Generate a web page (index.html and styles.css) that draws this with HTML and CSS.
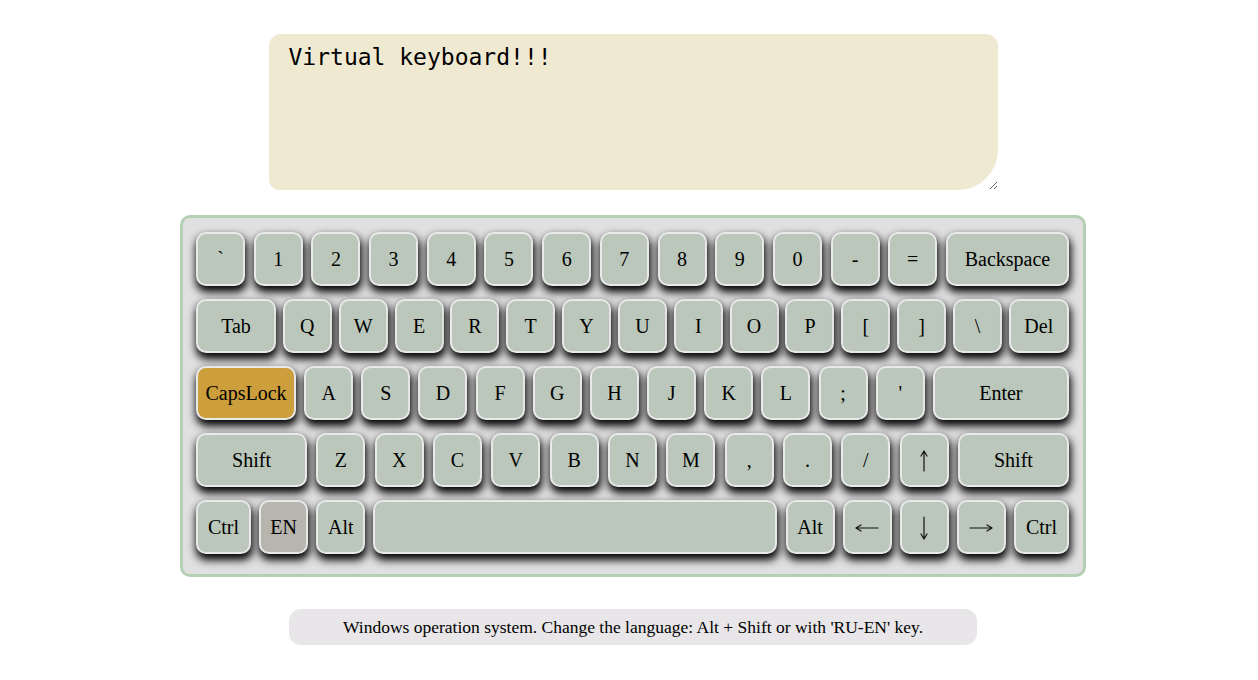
FILE: index.html
```html
<!DOCTYPE html>
<html lang="en">
<head>
<meta charset="utf-8">
<title>Virtual keyboard</title>
<link rel="stylesheet" href="styles.css">
</head>
<body>
<main class="page">
  <textarea class="output">Virtual keyboard!!!</textarea>
  <div class="keyboard">
    <div class="row">
      <div class="key">`</div><div class="key">1</div><div class="key">2</div><div class="key">3</div><div class="key">4</div><div class="key">5</div><div class="key">6</div><div class="key">7</div><div class="key">8</div><div class="key">9</div><div class="key">0</div><div class="key">-</div><div class="key">=</div><div class="key backspace">Backspace</div>
    </div>
    <div class="row">
      <div class="key tab">Tab</div><div class="key">Q</div><div class="key">W</div><div class="key">E</div><div class="key">R</div><div class="key">T</div><div class="key">Y</div><div class="key">U</div><div class="key">I</div><div class="key">O</div><div class="key">P</div><div class="key">[</div><div class="key">]</div><div class="key">\</div><div class="key del">Del</div>
    </div>
    <div class="row">
      <div class="key caps active">CapsLock</div><div class="key">A</div><div class="key">S</div><div class="key">D</div><div class="key">F</div><div class="key">G</div><div class="key">H</div><div class="key">J</div><div class="key">K</div><div class="key">L</div><div class="key">;</div><div class="key">'</div><div class="key enter">Enter</div>
    </div>
    <div class="row">
      <div class="key shift">Shift</div><div class="key">Z</div><div class="key">X</div><div class="key">C</div><div class="key">V</div><div class="key">B</div><div class="key">N</div><div class="key">M</div><div class="key">,</div><div class="key">.</div><div class="key">/</div>
      <div class="key" aria-label="↑"><svg class="arrow-v" width="10" height="22" viewBox="0 0 10 22"><path d="M5 1V21M5 1L2 6M5 1L8 6"/></svg></div>
      <div class="key shift">Shift</div>
    </div>
    <div class="row">
      <div class="key ctrl">Ctrl</div><div class="key lang">EN</div><div class="key">Alt</div><div class="key space"></div><div class="key">Alt</div>
      <div class="key" aria-label="←"><svg class="arrow-h" width="24" height="10" viewBox="0 0 24 10"><path d="M1 5H23M1 5L6 2M1 5L6 8"/></svg></div>
      <div class="key" aria-label="↓"><svg class="arrow-v" width="10" height="24" viewBox="0 0 10 24"><path d="M5 1V23M5 23L2 18M5 23L8 18"/></svg></div>
      <div class="key" aria-label="→"><svg class="arrow-h" width="24" height="10" viewBox="0 0 24 10"><path d="M1 5H23M23 5L18 2M23 5L18 8"/></svg></div>
      <div class="key ctrl">Ctrl</div>
    </div>
  </div>
  <p class="note">Windows operation system. Change the language: Alt + Shift or with 'RU-EN' key.</p>
</main>
</body>
</html>
```

FILE: styles.css
```css
html, body {
  margin: 0;
  padding: 0;
  background: #ffffff;
}

.page {
  display: flex;
  flex-direction: column;
  align-items: center;
  padding: 34px 0 0 8px;
  font-family: "Liberation Serif", "Times New Roman", serif;
  color: #000;
}

.output {
  box-sizing: border-box;
  width: 729px;
  height: 156px;
  margin: 0;
  padding: 10px 20px;
  border: none;
  outline: none;
  border-radius: 12px 12px 40px 10px;
  background: #f0e9d2;
  font-family: "DejaVu Sans Mono", "Liberation Mono", monospace;
  font-size: 23px;
  color: #000;
  resize: both;
}

.keyboard {
  box-sizing: border-box;
  width: 906px;
  margin-top: 25px;
  padding: 14px 14px 20px 13px;
  border: 3px solid #b4cfb4;
  border-radius: 10px;
  background: #e0e0e0;
  display: flex;
  flex-direction: column;
  gap: 13px;
}

.row {
  display: flex;
  justify-content: space-between;
}

.key {
  box-sizing: border-box;
  width: 49px;
  height: 54px;
  border: 2px solid #e9e9e9;
  border-radius: 10px;
  background: #bbc7bb;
  box-shadow: 1px 5px 8px 1px #000;
  display: flex;
  align-items: center;
  justify-content: center;
  font-size: 20px;
  line-height: 1;
  color: #000;
}

.key svg {
  fill: none;
  stroke: #111;
  stroke-width: 1.2;
  stroke-linecap: round;
}

.arrow-h { margin-top: 2px; }
.arrow-v { margin-top: 2px; }

.backspace { width: 123px; }
.tab { width: 80px; }
.del { width: 60px; }
.caps { width: 100px; }
.enter { width: 136px; }
.shift { width: 111px; }
.ctrl { width: 55px; }
.space { width: 404px; }

.active { background: #cd9e3c; }
.lang { background: #b8b4ae; }

.note {
  box-sizing: border-box;
  width: 688px;
  margin: 32px 0 0;
  padding: 9px 10px;
  border-radius: 12px;
  background: #e8e6e8;
  text-align: center;
  font-size: 17.5px;
  line-height: 18px;
}
```
